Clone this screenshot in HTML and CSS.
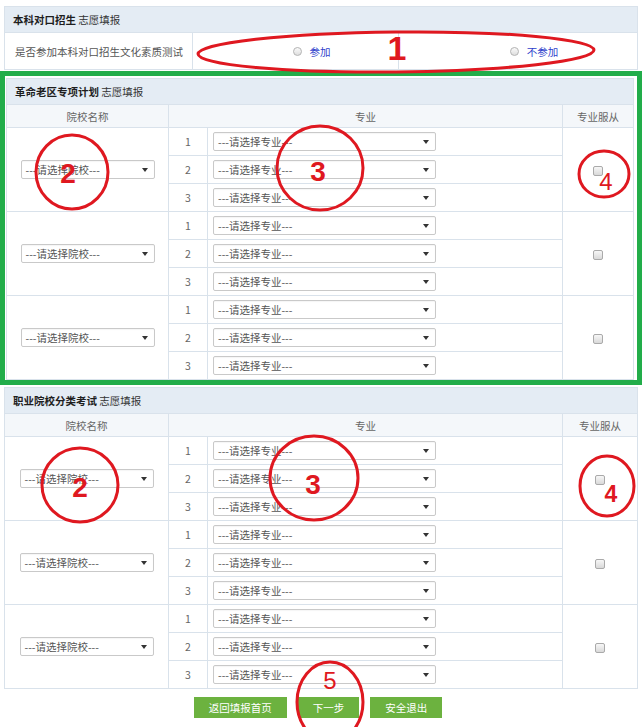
FILE: index.html
```html
<!DOCTYPE html>
<html lang="zh-CN">
<head>
  <meta charset="UTF-8">
  <meta name="viewport" content="width=device-width, initial-scale=1.0">
  <title>志愿填报</title>
  <link rel="stylesheet" href="styles.css">
</head>
<body>
  <div class="page">
    <table class="sheet sheet-top">
      <colgroup><col style="width:188px"><col style="width:206px"><col></colgroup>
      <tr class="title-row">
        <th colspan="3" class="title"><b>本科对口招生</b> 志愿填报</th>
      </tr>
      <tr class="ask-row">
        <td class="ask">是否参加本科对口招生文化素质测试</td>
        <td class="opt"><span class="radio"></span><span class="opt-text">参加</span></td>
        <td class="opt"><span class="radio"></span><span class="opt-text">不参加</span></td>
      </tr>
    </table>

    <div class="plan">
      <table class="sheet sheet-plan">
        <colgroup><col style="width:162px"><col style="width:39px"><col style="width:355px"><col></colgroup>
        <tr class="title-row"><th colspan="4" class="title"><b>革命老区专项计划</b> 志愿填报</th></tr>
        <tr class="head-row"><th>院校名称</th><th colspan="2">专业</th><th>专业服从</th></tr>

        <tr>
          <td rowspan="3" class="school"><div class="pick pick-school">---请选择院校---</div></td>
          <td class="num">1</td><td class="major"><div class="pick pick-major">---请选择专业---</div></td>
          <td rowspan="3" class="obey"><span class="tick"></span></td>
        </tr>
        <tr><td class="num">2</td><td class="major"><div class="pick pick-major">---请选择专业---</div></td></tr>
        <tr><td class="num">3</td><td class="major"><div class="pick pick-major">---请选择专业---</div></td></tr>

        <tr>
          <td rowspan="3" class="school"><div class="pick pick-school">---请选择院校---</div></td>
          <td class="num">1</td><td class="major"><div class="pick pick-major">---请选择专业---</div></td>
          <td rowspan="3" class="obey"><span class="tick"></span></td>
        </tr>
        <tr><td class="num">2</td><td class="major"><div class="pick pick-major">---请选择专业---</div></td></tr>
        <tr><td class="num">3</td><td class="major"><div class="pick pick-major">---请选择专业---</div></td></tr>

        <tr>
          <td rowspan="3" class="school"><div class="pick pick-school">---请选择院校---</div></td>
          <td class="num">1</td><td class="major"><div class="pick pick-major">---请选择专业---</div></td>
          <td rowspan="3" class="obey"><span class="tick"></span></td>
        </tr>
        <tr><td class="num">2</td><td class="major"><div class="pick pick-major">---请选择专业---</div></td></tr>
        <tr><td class="num">3</td><td class="major"><div class="pick pick-major">---请选择专业---</div></td></tr>
      </table>
    </div>

    <table class="sheet sheet-job">
      <colgroup><col style="width:164px"><col style="width:39px"><col style="width:355px"><col></colgroup>
      <tr class="title-row"><th colspan="4" class="title"><b>职业院校分类考试</b> 志愿填报</th></tr>
      <tr class="head-row"><th>院校名称</th><th colspan="2">专业</th><th>专业服从</th></tr>

      <tr>
        <td rowspan="3" class="school"><div class="pick pick-school">---请选择院校---</div></td>
        <td class="num">1</td><td class="major"><div class="pick pick-major">---请选择专业---</div></td>
        <td rowspan="3" class="obey"><span class="tick"></span></td>
      </tr>
      <tr><td class="num">2</td><td class="major"><div class="pick pick-major">---请选择专业---</div></td></tr>
      <tr><td class="num">3</td><td class="major"><div class="pick pick-major">---请选择专业---</div></td></tr>

      <tr>
        <td rowspan="3" class="school"><div class="pick pick-school">---请选择院校---</div></td>
        <td class="num">1</td><td class="major"><div class="pick pick-major">---请选择专业---</div></td>
        <td rowspan="3" class="obey"><span class="tick"></span></td>
      </tr>
      <tr><td class="num">2</td><td class="major"><div class="pick pick-major">---请选择专业---</div></td></tr>
      <tr><td class="num">3</td><td class="major"><div class="pick pick-major">---请选择专业---</div></td></tr>

      <tr>
        <td rowspan="3" class="school"><div class="pick pick-school">---请选择院校---</div></td>
        <td class="num">1</td><td class="major"><div class="pick pick-major">---请选择专业---</div></td>
        <td rowspan="3" class="obey"><span class="tick"></span></td>
      </tr>
      <tr><td class="num">2</td><td class="major"><div class="pick pick-major">---请选择专业---</div></td></tr>
      <tr><td class="num">3</td><td class="major"><div class="pick pick-major">---请选择专业---</div></td></tr>
    </table>

    <div class="actions">
      <a class="btn">返回填报首页</a>
      <a class="btn">下一步</a>
      <a class="btn">安全退出</a>
    </div>

    <!-- red hand-drawn marks laid over the form -->
    <svg class="marks" width="642" height="727" viewBox="0 0 642 727">
      <g fill="none" stroke="#df1820" stroke-width="3">
        <ellipse cx="396" cy="52" rx="198" ry="20" transform="rotate(-0.6 396 52)"/>
        <ellipse cx="72" cy="172" rx="36" ry="37"/>
        <ellipse cx="320" cy="168" rx="43" ry="42"/>
        <ellipse cx="604" cy="174" rx="25" ry="23"/>
        <ellipse cx="80" cy="485" rx="38" ry="37"/>
        <ellipse cx="314" cy="478" rx="44" ry="42"/>
        <ellipse cx="607" cy="486" rx="27" ry="30"/>
        <ellipse cx="330" cy="702" rx="33" ry="40"/>
      </g>
      <g fill="#df1820" font-family="Liberation Sans, sans-serif" text-anchor="middle">
        <text x="397" y="60" font-size="34" font-weight="bold">1</text>
        <text x="68" y="183" font-size="28" font-weight="bold">2</text>
        <text x="318" y="181" font-size="28" font-weight="bold">3</text>
        <text x="606" y="190" font-size="24">4</text>
        <text x="80" y="497" font-size="28" font-weight="bold">2</text>
        <text x="313" y="494" font-size="28" font-weight="bold">3</text>
        <text x="611" y="502" font-size="23" font-weight="bold">4</text>
        <text x="330" y="689" font-size="24">5</text>
      </g>
    </svg>
  </div>
</body>
</html>
```

FILE: styles.css
```css
body {
  margin: 0;
  padding: 0;
  background: #fff;
  font-family: "Noto Sans CJK SC", "Noto Sans", sans-serif;
  font-size: 10.5px;
  color: #555;
}
.page {
  position: relative;
  width: 642px;
  height: 727px;
  overflow: hidden;
}
.sheet {
  border-collapse: collapse;
  table-layout: fixed;
}
.sheet th,
.sheet td {
  border: 1px solid #d9e2eb;
  padding: 0;
  font-weight: normal;
}
.sheet td {
  height: 27px;
}
.sheet-top {
  margin: 6px 0 0 4px;
  width: 634px;
}
.title-row th {
  height: 25px;
  background: #e4ecf4;
  text-align: left;
  padding-left: 8px;
  color: #333;
}
.title b {
  color: #1e1e1e;
}
.sheet .ask-row td {
  height: 36px;
}
.sheet .ask {
  padding-left: 10px;
  color: #555;
}
.sheet .opt {
  text-align: center;
  padding-left: 32px;
  white-space: nowrap;
}
.radio {
  display: inline-block;
  width: 7px;
  height: 7px;
  border: 1px solid #b5b5b5;
  border-radius: 50%;
  background: linear-gradient(#fafafa, #dedede);
  vertical-align: middle;
  margin-right: 8px;
  position: relative;
  top: -1px;
}
.opt-text {
  color: #2f3fcc;
}
.plan {
  margin-top: 1px;
  width: 630px;
  border: 5px solid #22ad4a;
  padding: 2px 1px 0 1px;
}
.sheet-plan {
  width: 628px;
}
.sheet-job {
  margin: 2px 0 0 4px;
  width: 634px;
}
.head-row th {
  height: 22px;
  background: #f4f7fa;
  text-align: center;
  color: #666;
}
.school,
.obey {
  text-align: center;
}
.num {
  text-align: center;
  color: #666;
}
.sheet .major {
  padding-left: 5px;
}
.pick {
  position: relative;
  box-sizing: border-box;
  height: 19px;
  line-height: 17px;
  border: 1px solid #c9c9c9;
  border-radius: 2px;
  background: #fff;
  padding-left: 4px;
  text-align: left;
  color: #555;
  box-shadow: inset 0 1px 1px rgba(0,0,0,0.04);
}
.pick::after {
  content: "";
  position: absolute;
  right: 6px;
  top: 7px;
  border-left: 3px solid transparent;
  border-right: 3px solid transparent;
  border-top: 4px solid #333;
}
.pick-school {
  display: inline-block;
  width: 134px;
}
.pick-major {
  width: 223px;
}
.tick {
  display: inline-block;
  width: 8px;
  height: 8px;
  border: 1px solid #aaa;
  border-radius: 2px;
  background: linear-gradient(#f7f7f7, #d9d9d9);
  vertical-align: middle;
}
.actions {
  display: flex;
  justify-content: center;
  gap: 11px;
  margin-top: 8px;
  padding-right: 6px;
}
.btn {
  display: inline-block;
  height: 21px;
  line-height: 21px;
  padding: 0 15px;
  background: #6cb23f;
  color: #fff;
  cursor: pointer;
}
.marks {
  position: absolute;
  left: 0;
  top: 0;
  pointer-events: none;
}
```
